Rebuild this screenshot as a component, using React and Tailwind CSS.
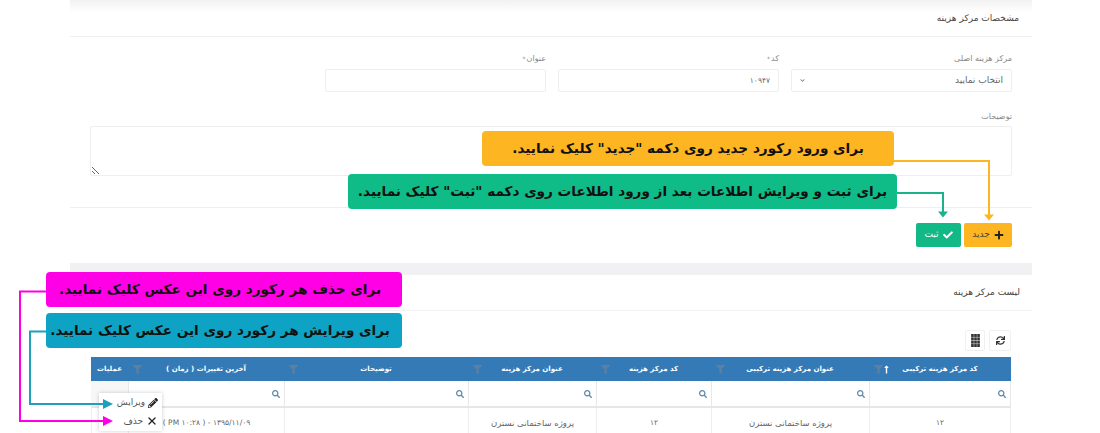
import React from "react";
import { FaPlus, FaCheck, FaPencilAlt, FaFilter, FaSearch, FaSync, FaLongArrowAltUp, FaChevronDown } from "react-icons/fa";
import { X } from "lucide-react";

const cols = "grid grid-cols-[142px_158px_115px_128px_184px_156px_37px]";
const headers = [
  ["کد مرکز هزینه ترکیبی", true],
  ["عنوان مرکز هزینه ترکیبی"],
  ["کد مرکز هزینه"],
  ["عنوان مرکز هزینه"],
  ["توضیحات"],
  ["آخرین تغییرات ( زمان )"],
];
const row = ["۱۲", "پروژه ساختمانی نسترن", "۱۲", "پروژه ساختمانی نسترن", "", "۱۳۹۵/۱۱/۰۹ - ( PM ۱۰:۲۸ )", ""];

function GridIcon() {
  const cells = [];
  for (let r = 0; r < 4; r++) for (let c = 0; c < 3; c++) cells.push(<rect key={r + "-" + c} x={c * 3} y={r * 3.3} width="2.6" height="2.9" fill="#333" />);
  return <svg width="9" height="13" viewBox="0 0 8.6 12.8">{cells}</svg>;
}

function Callout({ className, children }) {
  return <div className={"absolute flex items-center justify-center whitespace-nowrap rounded-[4px] text-[13.6px] font-bold text-[#111] " + className}>{children}</div>;
}

export default function App() {
  return (
    <div dir="rtl" className="relative h-[433px] w-[1100px] overflow-hidden bg-white font-['DejaVu_Sans',sans-serif] text-[#555]">
      <div className="mr-[68px] flex w-[962px] flex-col">
        <div className="h-3 bg-gradient-to-b from-[#f1f1f3] to-white" />
        <div className="flex h-[25px] items-start border-b border-[#eeeeee] pr-[13px] text-[9px] text-[#444]">مشخصات مرکز هزینه</div>

        <div className="flex flex-col border-b border-[#eeeeee] px-[20px] pb-[31px] pt-[11px]">
          <div className="flex gap-[12px]">
            {[
              ["مرکز هزینه اصلی"],
              ["کد", true],
              ["عنوان", true],
            ].map(([label, req], i) => (
              <div key={i} className="flex w-[221px] flex-col">
                <div className="flex h-[21px] items-center gap-[1px] text-[8px] text-[#888]">{label}{req && <span className="text-[6px]">*</span>}</div>
                <div className="flex h-[23px] items-center justify-between rounded-[2px] border border-[#eeeeee] px-[8px] text-[#666]">
                  <span className={i === 0 ? "text-[9px]" : "text-[7.5px]"}>{i === 0 ? "انتخاب نمایید" : i === 1 ? "۱۰۹۴۷" : ""}</span>
                  {i === 0 && <FaChevronDown className="text-[5px] text-[#777]" />}
                </div>
              </div>
            ))}
          </div>
          <div className="mt-[16px] flex h-[18px] items-center text-[8px] text-[#888]">توضیحات</div>
          <textarea readOnly className="block h-[50px] w-full rounded-[2px] border border-[#eeeeee] outline-none" />
        </div>

        <div className="flex gap-[3px] pr-[20px] pt-[15px]">
          <div className="flex h-[24px] w-[48px] items-center justify-center gap-[4px] rounded-[2px] bg-[#fdb522] text-[9px] text-[#444]">
            <FaPlus className="text-[10px] text-[#222]" />
            <span>جدید</span>
          </div>
          <div className="flex h-[24px] w-[45px] items-center justify-center gap-[4px] rounded-[2px] bg-[#12b886] text-[9px] text-white">
            <FaCheck className="text-[10px]" />
            <span>ثبت</span>
          </div>
        </div>

        <div className="mt-[16px] h-[12px] bg-[#f1f1f4]" />
        <div className="flex h-[36px] items-center border-b border-[#f2f2f2] pr-[12px] text-[9px] text-[#444]">لیست مرکز هزینه</div>

        <div className="flex gap-[4px] pr-[21px] pt-[19px]">
          <div className="flex h-[21px] w-[22px] items-center justify-center rounded-[2px] border border-[#f0f0f0] text-[9px] text-[#333]"><FaSync /></div>
          <div className="flex h-[21px] w-[20px] items-center justify-center rounded-[2px] border border-[#f0f0f0]"><GridIcon /></div>
        </div>

        <div className="mr-[21px] mt-[6px] w-[920px]">
          <div className={cols + " h-[24px] bg-[#337ab7] text-[7px] font-bold text-white"}>
            {headers.map(([h, sorted], i) => (
              <div key={i} className="relative flex items-center justify-center">
                <span>{h}</span>
                {sorted && <FaLongArrowAltUp className="absolute left-[13px] text-[9px] text-white" />}
                <FaFilter className="absolute left-[5px] text-[9px] text-[#5e7f9f]" />
              </div>
            ))}
            <div className="flex items-center justify-center">عملیات</div>
          </div>
          <div className={cols + " h-[27px] border-b-[2px] border-[#e6e6e6]"}>
            {headers.map((_, i) => (
              <div key={i} className={"flex items-center border-l border-[#e8e8e8] pr-[4px] " + (i === 0 ? "border-r" : "")}>
                <FaSearch className="text-[8px] text-[#5b87a8]" />
              </div>
            ))}
            <div className="bg-[#f7f7f7]" />
          </div>
          <div className={cols + " h-[30px] text-[8.5px] text-[#666]"}>
            {row.map((c, i) => (
              <div key={i} className={"flex items-center justify-center border-l border-[#eeeeee] " + (i === 0 ? "border-r text-[7.5px]" : i === 2 || i === 5 ? "text-[7.5px]" : "")}>{c}</div>
            ))}
          </div>
        </div>
      </div>

      <Callout className="left-[482px] top-[131px] h-[35px] w-[412px] bg-[#fdb522]">برای ورود رکورد جدید روی دکمه "جدید" کلیک نمایید.</Callout>
      <Callout className="left-[348px] top-[174px] h-[35px] w-[549px] bg-[#0fbb87]">برای ثبت و ویرایش اطلاعات بعد از ورود اطلاعات روی دکمه "ثبت" کلیک نمایید.</Callout>
      <Callout className="left-[46px] top-[272px] h-[35px] w-[356px] bg-[#ff00e6] pr-[8px]">برای حذف هر رکورد روی این عکس کلیک نمایید.</Callout>
      <Callout className="left-[46px] top-[313px] h-[35px] w-[356px] bg-[#0ea3c4] pr-[8px]">برای ویرایش هر رکورد روی این عکس کلیک نمایید.</Callout>

      <div className="absolute left-[99px] top-[393px] flex h-[38px] w-[63px] flex-col justify-center gap-[5px] bg-white pr-[4px] text-[9px] text-[#555] shadow-[0_0_4px_rgba(0,0,0,0.2)]">
        <div className="flex items-center gap-[3px]"><FaPencilAlt className="text-[10px] text-[#222]" /><span>ویرایش</span></div>
        <div className="flex items-center gap-[3px]"><X size={12} strokeWidth={2.6} className="text-[#222]" /><span>حذف</span></div>
      </div>

      <svg className="pointer-events-none absolute left-0 top-0" width="1100" height="433" fill="none">
        <path d="M894 161H989V215" stroke="#fdb522" strokeWidth="2" />
        <path d="M984 214.5h10l-5 6z" fill="#fdb522" />
        <path d="M897 193H943V212" stroke="#1bb18c" strokeWidth="2" />
        <path d="M938 211.5h10l-5 6z" fill="#1bb18c" />
        <path d="M46 291.5H20V421H106" stroke="#ff00e6" strokeWidth="2" />
        <path d="M103 416l10 5-10 5z" fill="#ff00e6" />
        <path d="M46 331.5H30V404H106" stroke="#1f9fbd" strokeWidth="2" />
        <path d="M103 399l10 5-10 5z" fill="#1f9fbd" />
      </svg>
    </div>
  );
}
